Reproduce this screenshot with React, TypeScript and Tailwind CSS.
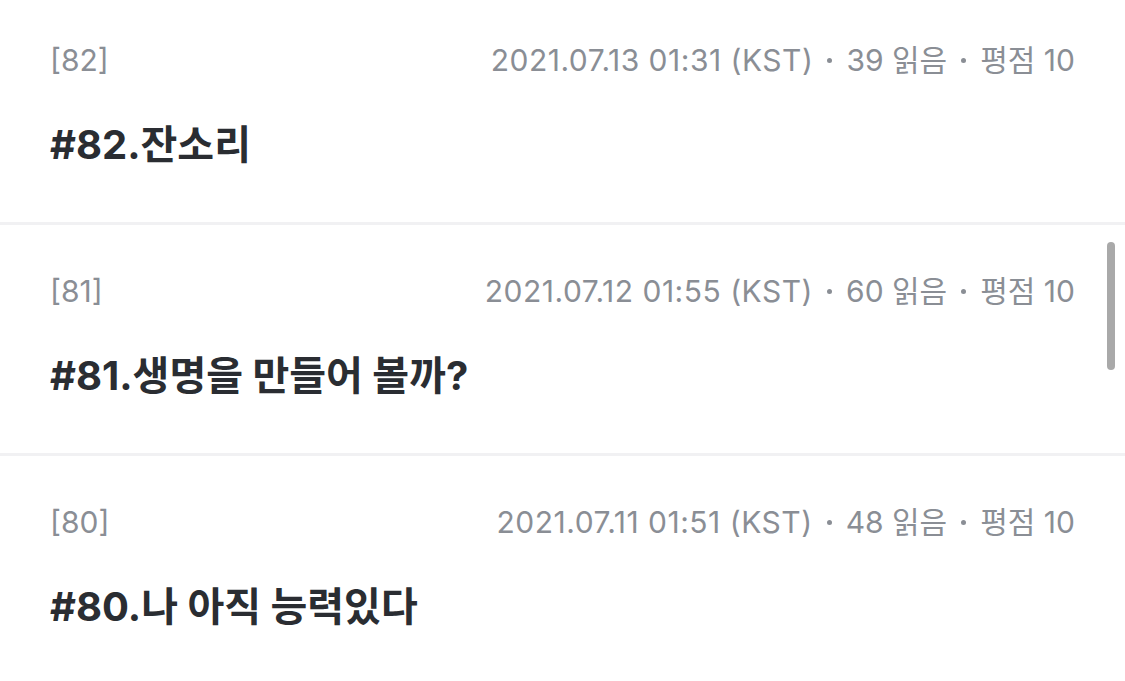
const episodes = [
	{ no: 82, date: "2021.07.13 01:31", reads: 39, rating: 10, title: "#82.잔소리" },
	{ no: 81, date: "2021.07.12 01:55", reads: 60, rating: 10, title: "#81.생명을 만들어 볼까?" },
	{ no: 80, date: "2021.07.11 01:51", reads: 48, rating: 10, title: "#80.나 아직 능력있다" },
];

const font = { fontFamily: '"Inter", "Noto Sans CJK KR", sans-serif' };

export default function App() {
	return (
		<div className="relative h-[681px] w-[1125px] overflow-hidden bg-white" style={font}>
			<ul>
				{episodes.map((ep, i) => (
					<li
						key={ep.no}
						className={
							i === 0
								? "px-[50px] pt-[43px] pb-[53px] border-b-[3px] border-[#f1f1f3]"
								: "px-[50px] pt-[49px] pb-[53px] border-b-[3px] border-[#f1f1f3]"
						}
					>
						<div className="flex items-center justify-between text-[30px] leading-[34px] text-[#8a8e95]">
							<span>[{ep.no}]</span>
							<span className="flex items-center">
								<span className="tracking-[0.5px]">{ep.date} (KST)</span>
								<span className="mx-[14px] h-[5px] w-[5px] rounded-full bg-[#8a8e95]" />
								<span>{ep.reads} 읽음</span>
								<span className="mx-[14px] h-[5px] w-[5px] rounded-full bg-[#8a8e95]" />
								<span>평점 {ep.rating}</span>
							</span>
						</div>
						<h2 className="mt-[44px] text-[40px] leading-[48px] font-bold text-[#2a2d32]">
							{ep.title}
						</h2>
					</li>
				))}
			</ul>
			<div className="absolute right-[10px] top-[242px] h-[128px] w-[8px] rounded-full bg-[#a9a9a9]" />
		</div>
	);
}
